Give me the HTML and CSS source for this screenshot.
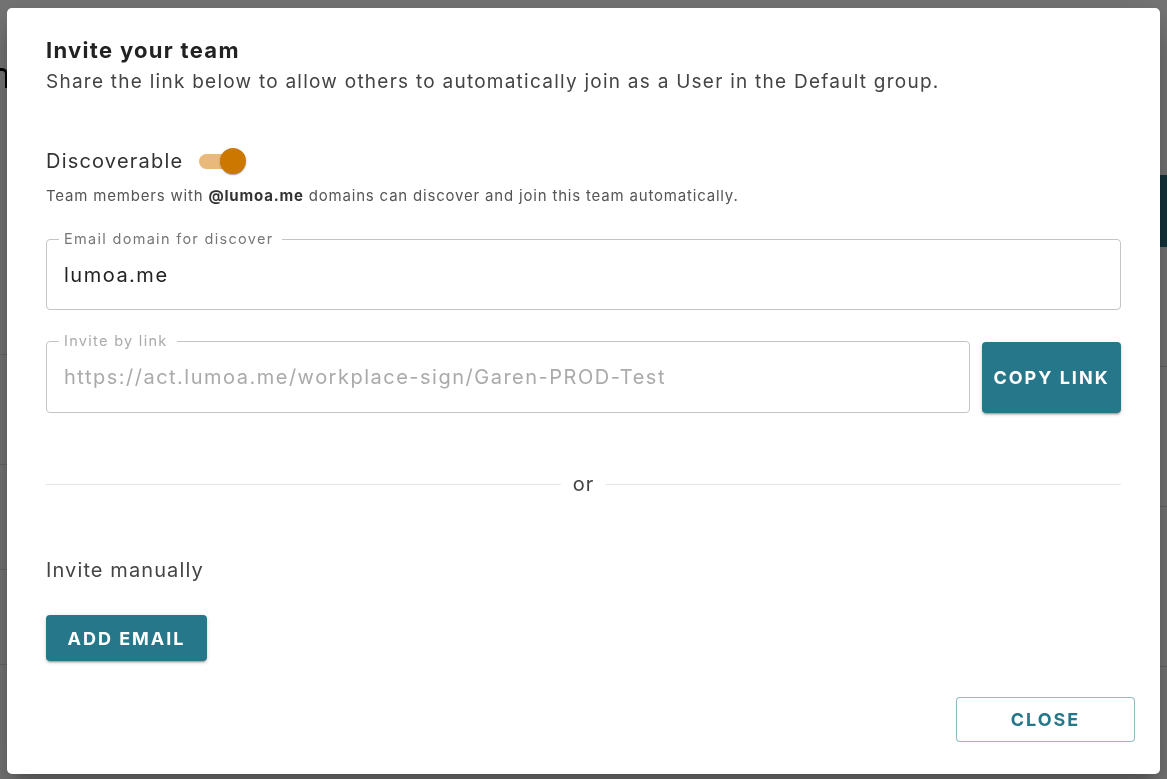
FILE: index.html
```html
<!DOCTYPE html>
<html lang="en">
<head>
<meta charset="utf-8">
<title>Invite your team</title>
<link rel="stylesheet" href="styles.css">
</head>
<body>
<div class="page">
  <div class="bg-left">
    <div class="bg-head"><span class="bg-glyph bg-glyph-n"></span></div>
    <div class="bg-row bg-row-a"></div>
    <div class="bg-row bg-row-b"></div>
    <div class="bg-row bg-row-c"></div>
    <div class="bg-row bg-row-d"></div>
  </div>
  <div class="bg-right">
    <div class="bg-bar"></div>
    <div class="bg-row bg-row-r1"></div>
    <div class="bg-row bg-row-r2"></div>
    <div class="bg-row bg-row-r3"></div>
  </div>
</div>
<div class="backdrop">
  <div class="dialog" role="dialog">
    <div class="content">
      <h2 class="title">Invite your team</h2>
      <p class="subtitle">Share the link below to allow others to automatically join as a User in the Default group.</p>
      <div class="discover-row">
        <span class="discover-label">Discoverable</span>
        <span class="switch"><span class="track"></span><span class="thumb"></span></span>
      </div>
      <p class="hint">Team members with <b>@lumoa.me</b> domains can discover and join this team automatically.</p>
      <fieldset class="field field-domain">
        <legend>Email domain for discover</legend>
        <div class="value">lumoa.me</div>
      </fieldset>
      <div class="link-row">
        <fieldset class="field field-link disabled">
          <legend>Invite by link</legend>
          <div class="value">https://act.lumoa.me/workplace-sign/Garen-PROD-Test</div>
        </fieldset>
        <button class="btn btn-contained btn-copy">COPY LINK</button>
      </div>
      <div class="divider"><span class="line"></span><span class="or">or</span><span class="line"></span></div>
      <p class="manual">Invite manually</p>
      <button class="btn btn-contained btn-add">ADD EMAIL</button>
    </div>
    <div class="actions">
      <button class="btn btn-outlined btn-close">CLOSE</button>
    </div>
  </div>
</div>
</body>
</html>
```

FILE: styles.css
```css
* { box-sizing: border-box; }
html, body { margin: 0; height: 100%; }
body {
  font-family: Inter, "Open Sans", sans-serif;
  color: #222;
  background: #fff;
  overflow: hidden;
}

/* background page (mostly hidden behind the dialog) */
.page {
  height: 100vh;
  display: grid;
  grid-template-columns: 1fr 1fr;
}
.bg-left, .bg-right { display: flex; flex-direction: column; }
.bg-head { height: 140px; padding-top: 68px; }
.bg-glyph-n {
  display: block;
  width: 8px;
  height: 20px;
  border: 3px solid #000;
  border-left: none;
  border-bottom: none;
  border-radius: 0 6px 0 0;
}
.bg-row { border-bottom: 1px solid #ddd; }
.bg-row-a { height: 215px; }
.bg-row-b { height: 110px; }
.bg-row-c { height: 105px; }
.bg-row-d { height: 95px; }
.bg-bar { margin-top: 175px; height: 72px; background: #2b6f7e; }
.bg-row-r1 { height: 120px; }
.bg-row-r2 { height: 140px; }
.bg-row-r3 { height: 160px; }

/* modal */
.backdrop {
  position: fixed;
  inset: 0;
  background: rgba(0, 0, 0, 0.54);
  display: flex;
  padding: 8px 7px 5px 7px;
}
.dialog {
  flex: 1;
  background: #fff;
  border-radius: 5px;
  box-shadow: 0 11px 15px -7px rgba(0,0,0,.2), 0 24px 38px 3px rgba(0,0,0,.14), 0 9px 46px 8px rgba(0,0,0,.12);
  display: flex;
  flex-direction: column;
}
.content {
  padding: 30px 39px 0 39px;
  display: flex;
  flex-direction: column;
  align-items: flex-start;
}
.title {
  margin: 0;
  font-size: 22px;
  line-height: 24px;
  font-weight: 700;
  letter-spacing: 1.3px;
  color: #222;
}
.subtitle {
  margin: 8px 0 0;
  font-size: 19px;
  line-height: 24px;
  letter-spacing: 1.25px;
  color: #444;
}
.discover-row {
  margin-top: 54px;
  height: 26px;
  display: flex;
  align-items: center;
}
.discover-label { font-size: 20px; letter-spacing: 1.2px; color: #333; }
.switch {
  position: relative;
  width: 48px;
  height: 26px;
  margin-left: 16px;
}
.track {
  position: absolute;
  left: 0;
  top: 6px;
  width: 40px;
  height: 15px;
  border-radius: 8px;
  background: #e8b97a;
}
.thumb {
  position: absolute;
  left: 21px;
  top: 0;
  width: 26px;
  height: 26px;
  border-radius: 50%;
  background: #cc7700;
  box-shadow: 0 2px 1px -1px rgba(0,0,0,.2), 0 1px 1px 0 rgba(0,0,0,.14), 0 1px 3px 0 rgba(0,0,0,.12);
}
.hint {
  margin: 12px 0 0;
  font-size: 15px;
  line-height: 20px;
  letter-spacing: 0.81px;
  color: #555;
}
.hint b { color: #333; font-weight: 700; }

.field {
  margin: 0;
  padding: 0 17px;
  border: 1px solid #c4c4c4;
  border-radius: 4px;
  min-width: 0;
}
.field legend {
  margin-left: -5px;
  padding: 0 9px 0 5px;
  font-size: 14.5px;
  line-height: 16px;
  letter-spacing: 1.3px;
  color: #777;
}
.field .value {
  padding: 16px 0 22px;
  font-size: 20px;
  line-height: 24px;
  letter-spacing: 1.5px;
  color: #222;
  white-space: nowrap;
}
.field-domain { margin-top: 25px; width: 100%; }
.field.disabled legend, .field.disabled .value { color: #aaa; }

.link-row {
  margin-top: 23px;
  width: 100%;
  display: flex;
  align-items: flex-end;
  gap: 12px;
}
.field-link { flex: 1; }
.field-link .value { padding-bottom: 23px; }

.btn {
  font-family: inherit;
  border-radius: 4px;
  font-weight: 700;
  text-transform: uppercase;
  letter-spacing: 2px;
  cursor: pointer;
  font-size: 18px;
}
.btn-contained {
  background: #267789;
  color: #fff;
  border: none;
  box-shadow: 0 3px 1px -2px rgba(0,0,0,.2), 0 2px 2px 0 rgba(0,0,0,.14), 0 1px 5px 0 rgba(0,0,0,.12);
}
.btn-copy {
  width: 139px;
  height: 71px;
  flex: none;
}
.divider {
  margin-top: 59px;
  width: 100%;
  height: 24px;
  display: flex;
  align-items: center;
  gap: 12px;
}
.divider .line { flex: 1; height: 1px; background: #e6e6e6; }
.divider .or { font-size: 20px; color: #444; line-height: 24px; letter-spacing: 1px; }

.manual {
  margin: 62px 0 0;
  font-size: 20px;
  line-height: 24px;
  letter-spacing: 1.1px;
  color: #444;
}
.btn-add {
  margin-top: 33px;
  width: 161px;
  height: 46px;
}
.actions {
  margin-top: auto;
  padding: 0 25px 32px;
  display: flex;
  justify-content: flex-end;
}
.btn-outlined {
  background: #fff;
  color: #267789;
  border: 1px solid rgba(38, 119, 137, 0.5);
}
.btn-close {
  width: 179px;
  height: 45px;
}
```
